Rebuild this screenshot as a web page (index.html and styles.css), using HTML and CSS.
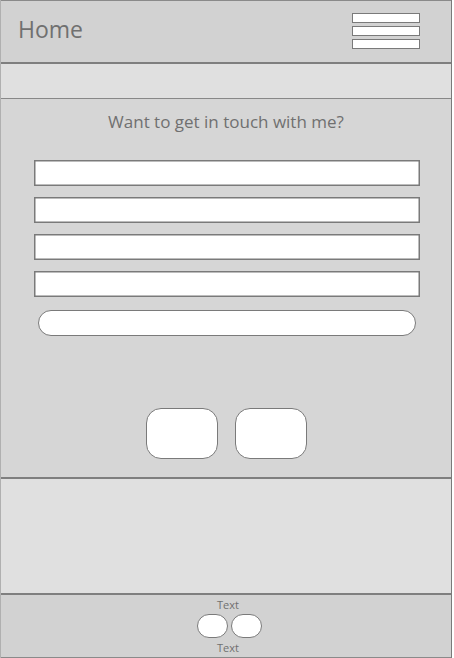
FILE: index.html
```html
<!DOCTYPE html>
<html lang="en">

<head>
    <meta charset="UTF-8">
    <meta name="viewport" content="width=device-width, initial-scale=1.0">
    <title>Contact</title>
    <link rel="stylesheet" href="styles.css">
</head>

<body>
    <div class="page">
        <!-- top bar -->
        <header class="topbar">
            <span class="brand">Home</span>
            <div class="menu">
                <div class="menu-bar"></div>
                <div class="menu-bar"></div>
                <div class="menu-bar"></div>
            </div>
        </header>

        <nav class="subbar"></nav>

        <!-- contact form -->
        <main class="contact">
            <h2>Want to get in touch with me?</h2>
            <div class="fields">
                <input type="text" class="field">
                <input type="text" class="field">
                <input type="text" class="field">
                <input type="text" class="field">
            </div>
            <button class="send"></button>
            <div class="actions">
                <button class="square"></button>
                <button class="square"></button>
            </div>
        </main>

        <section class="extra"></section>

        <footer class="bottom">
            <span class="small">Text</span>
            <div class="chips">
                <button class="chip"></button>
                <button class="chip"></button>
            </div>
            <span class="small">Text</span>
        </footer>
    </div>
</body>

</html>
```

FILE: styles.css
```css
body {
    margin: 0;
    font-family: "Open Sans", "Noto Sans", sans-serif;
    color: #707070;
}

.page {
    width: 452px;
    height: 658px;
    box-sizing: border-box;
    border-left: 1px solid #b0b0b0;
    border-right: 1px solid #7a7a7a;
    display: flex;
    flex-direction: column;
}

.topbar {
    height: 64px;
    box-sizing: border-box;
    border-top: 1px solid #8a8a8a;
    border-bottom: 2px solid #7f7f7f;
    background-color: #d2d2d2;
    display: flex;
    align-items: center;
    justify-content: space-between;
    padding: 0 31px 0 17px;
}

.brand {
    font-size: 23px;
    margin-top: -6px;
}

.menu {
    display: flex;
    flex-direction: column;
    gap: 3px;
    margin-top: -1px;
}

.menu-bar {
    width: 66px;
    height: 8px;
    background-color: #fff;
    border: 1px solid #7a7a7a;
}

.subbar {
    height: 35px;
    box-sizing: border-box;
    border-bottom: 1px solid #888;
    background-color: #e0e0e0;
}

.contact {
    height: 380px;
    box-sizing: border-box;
    border-bottom: 2px solid #7f7f7f;
    background-color: #d6d6d6;
    display: flex;
    flex-direction: column;
    align-items: center;
    padding-top: 11px;
}

.contact h2 {
    margin: 0;
    font-size: 17px;
    font-weight: normal;
    line-height: 24px;
}

.fields {
    display: flex;
    flex-direction: column;
    gap: 11px;
    margin: 26px 0 0 2px;
}

.field {
    width: 386px;
    height: 26px;
    box-sizing: border-box;
    margin: 0;
    border: 1px solid #7a7a7a;
    box-shadow: inset 0 0 0 0.5px #7a7a7a;
    background-color: #fff;
}

.send {
    width: 378px;
    height: 26px;
    margin: 13px 0 0 2px;
    border: 1px solid #7a7a7a;
    border-radius: 13px;
    background-color: #fff;
    padding: 0;
}

.actions {
    display: flex;
    gap: 17px;
    margin-top: 72px;
}

.square {
    width: 72px;
    height: 51px;
    padding: 0;
    border: 1px solid #7a7a7a;
    border-radius: 15px;
    background-color: #fff;
}

.extra {
    height: 116px;
    box-sizing: border-box;
    border-bottom: 2px solid #7f7f7f;
    background-color: #e0e0e0;
}

.bottom {
    height: 63px;
    box-sizing: border-box;
    border-bottom: 1px solid #8a8a8a;
    background-color: #d2d2d2;
    display: flex;
    flex-direction: column;
    align-items: center;
    padding: 2px 0 0 4px;
}

.small {
    font-size: 11px;
    line-height: 15px;
}

.chips {
    display: flex;
    gap: 3px;
    margin: 2px 0 2px 2px;
}

.chip {
    width: 31px;
    height: 24px;
    padding: 0;
    border: 1px solid #7a7a7a;
    border-radius: 12px;
    background-color: #fff;
}
```
